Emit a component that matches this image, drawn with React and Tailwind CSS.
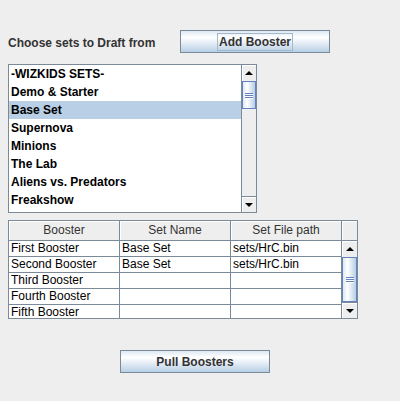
import React from "react";

function Arrow({ up }) {
  return (
    <svg width="8" height="4" viewBox="0 0 8 4">
      {up ? <polygon points="0,4 4,0 8,4" fill="#000" /> : <polygon points="0,0 8,0 4,4" fill="#000" />}
    </svg>
  );
}

function Thumb({ className }) {
  return (
    <div
      className={`border border-[#6382bf] bg-[linear-gradient(to_right,#dde8f3_0%,#ffffff_35%,#dde8f3_65%,#b8cfe5_100%)] flex flex-col items-center justify-center gap-[1px] ${className}`}
    >
      <div className="w-[8px] h-[1px] bg-[#6382bf] shadow-[0_1px_0_#ffffff]" />
      <div className="w-[8px] h-[1px] bg-[#6382bf] shadow-[0_1px_0_#ffffff]" />
      <div className="w-[8px] h-[1px] bg-[#6382bf] shadow-[0_1px_0_#ffffff]" />
    </div>
  );
}

function VScroll({ thumbClass, withLeft }) {
  return (
    <div className={`w-[15px] flex flex-col bg-[#eeeeee] ${withLeft ? "border-l border-[#7a8a99]" : ""}`}>
      <div className="h-[16px] shrink-0 flex items-center justify-center shadow-[inset_1px_1px_0_#ffffff]">
        <Arrow up />
      </div>
      <div className="flex-1 flex flex-col">
        <Thumb className={thumbClass} />
      </div>
      <div className="h-[16px] shrink-0 border-t border-[#7a8a99] flex items-center justify-center shadow-[inset_1px_1px_0_#ffffff]">
        <Arrow />
      </div>
    </div>
  );
}

function Button({ children, focus }) {
  return (
    <div className="w-[150px] h-[23px] border border-[#7a8a99] flex items-center justify-center bg-[linear-gradient(to_bottom,#dde8f3_0%,#ffffff_30%,#e8eff7_55%,#b8cfe5_100%)] text-[12px] font-bold text-[#333333]">
      {focus ? (
        <span className="border border-[#a3b8cc] px-[1px] h-[18px] leading-[16px] mt-[1px]">{children}</span>
      ) : (
        <span className="leading-[16px] mt-[1px]">{children}</span>
      )}
    </div>
  );
}

const items = [
  "-WIZKIDS SETS-",
  "Demo & Starter",
  "Base Set",
  "Supernova",
  "Minions",
  "The Lab",
  "Aliens vs. Predators",
  "Freakshow",
];

const rows = [
  ["First Booster", "Base Set", "sets/HrC.bin"],
  ["Second Booster", "Base Set", "sets/HrC.bin"],
  ["Third Booster", "", ""],
  ["Fourth Booster", "", ""],
  ["Fifth Booster", "", ""],
];

export default function App() {
  return (
    <div className="w-[400px] h-[401px] bg-[#eeeeee] overflow-hidden font-['Liberation_Sans',Arial,sans-serif]">
      <div className="pt-[30px] pl-[8px] flex items-center">
        <div className="w-[172px] text-[12px] font-bold text-[#333333] leading-[16px] mt-[2px] whitespace-nowrap">
          Choose sets to Draft from
        </div>
        <Button focus>Add Booster</Button>
      </div>

      <div className="ml-[8px] mt-[11px] w-[249px] h-[149px] border border-[#7a8a99] flex bg-white">
        <div className="flex-1 overflow-hidden">
          {items.map((it, i) => (
            <div
              key={it}
              className={`h-[18px] pt-[1px] leading-[17px] pl-[2px] text-[12px] font-bold text-black whitespace-nowrap ${
                i === 2 ? "bg-[#b8cfe5]" : ""
              }`}
            >
              {it}
            </div>
          ))}
        </div>
        <VScroll withLeft thumbClass="h-[28px]" />
      </div>

      <div className="ml-[8px] mt-[7px] w-[350px] h-[99px] border border-[#7a8a99] flex flex-col bg-[#eeeeee] text-[12px]">
        <div className="flex h-[20px] shrink-0 border-b border-[#7a8a99]">
          {["Booster", "Set Name", "Set File path"].map((h) => (
            <div
              key={h}
              className="w-[111px] border-r border-[#7a8a99] text-center leading-[19px] text-[#333333] shadow-[inset_1px_1px_0_#ffffff]"
            >
              {h}
            </div>
          ))}
          <div className="flex-1 shadow-[inset_1px_1px_0_#ffffff]" />
        </div>
        <div className="flex flex-1 overflow-hidden">
          <div className="w-[333px] bg-white overflow-hidden">
            {rows.map((r) => (
              <div key={r[0]} className="flex h-[16px] border-b border-[#7a8a99]">
                {r.map((c, j) => (
                  <div
                    key={j}
                    className="w-[111px] border-r border-[#7a8a99] pl-[2px] leading-[15px] text-black whitespace-nowrap overflow-hidden"
                  >
                    {c}
                  </div>
                ))}
              </div>
            ))}
          </div>
          <VScroll thumbClass="flex-1" />
        </div>
      </div>

      <div className="ml-[120px] mt-[31px]">
        <Button>Pull Boosters</Button>
      </div>
    </div>
  );
}
